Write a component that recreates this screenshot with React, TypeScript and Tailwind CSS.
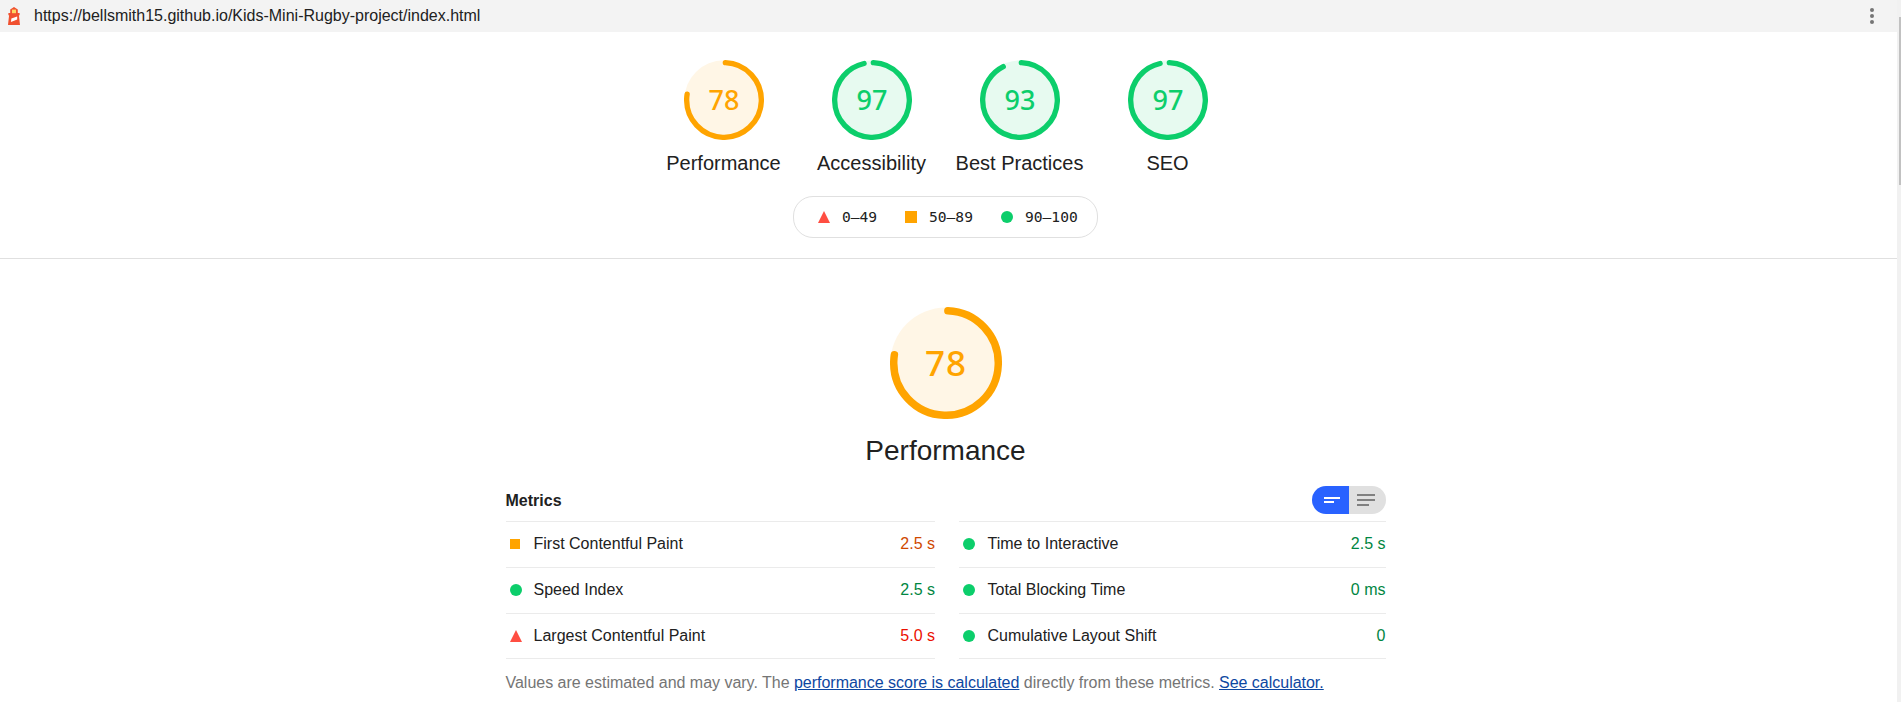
type Level = "pass" | "average" | "fail";

const tone = {
  pass: { ring: "stroke-[#0cce6b]", disc: "fill-[#e7faf0]", number: "text-[#0cce6b]", value: "text-[#018642]" },
  average: { ring: "stroke-[#ffa400]", disc: "fill-[#fff6e6]", number: "text-[#ffa400]", value: "text-[#d04900]" },
  fail: { ring: "stroke-[#ff4e42]", disc: "fill-[#ffedec]", number: "text-[#ff4e42]", value: "text-[#eb0f00]" },
};

function Marker({ level, small = false }: { level: Level; small?: boolean }) {
  if (level === "fail") {
    return (
      <svg className="h-3 w-3 shrink-0" viewBox="0 0 12 12">
        <path d="M6 0 12 12H0Z" fill="#ff4e42" />
      </svg>
    );
  }
  if (level === "average") {
    return <span className={small ? "mr-0.5 h-2.5 w-2.5 shrink-0 bg-[#ffa400]" : "h-3 w-3 shrink-0 bg-[#ffa400]"} />;
  }
  return <span className="h-3 w-3 shrink-0 rounded-full bg-[#0cce6b]" />;
}

function Gauge({ score, level, large = false }: { score: number; level: Level; large?: boolean }) {
  const length = 2 * Math.PI * 56;
  const arc = (score / 100) * length - 4;
  return (
    <div className={large ? "grid h-28 w-28" : "grid h-20 w-20"}>
      <svg viewBox="0 0 120 120" className="col-start-1 row-start-1 h-full w-full">
        <circle cx="60" cy="60" r="59.5" className={tone[level].disc} />
        <circle
          cx="60"
          cy="60"
          r="56"
          fill="none"
          strokeWidth="8"
          strokeLinecap="round"
          strokeDasharray={`${arc} ${length}`}
          transform="rotate(-87.9537 60 60)"
          className={tone[level].ring}
        />
      </svg>
      <div
        className={`col-start-1 row-start-1 flex items-center justify-center pb-0.5 font-['Noto_Sans',sans-serif] leading-none font-medium ${
          large ? "text-[35px] tracking-[1px]" : "text-[27px]"
        } ${tone[level].number}`}
      >
        {score}
      </div>
    </div>
  );
}

const categories: { label: string; score: number; level: Level }[] = [
  { label: "Performance", score: 78, level: "average" },
  { label: "Accessibility", score: 97, level: "pass" },
  { label: "Best Practices", score: 93, level: "pass" },
  { label: "SEO", score: 97, level: "pass" },
];

type Metric = { label: string; value: string; level: Level };

const leftMetrics: Metric[] = [
  { label: "First Contentful Paint", value: "2.5 s", level: "average" },
  { label: "Speed Index", value: "2.5 s", level: "pass" },
  { label: "Largest Contentful Paint", value: "5.0 s", level: "fail" },
];

const rightMetrics: Metric[] = [
  { label: "Time to Interactive", value: "2.5 s", level: "pass" },
  { label: "Total Blocking Time", value: "0 ms", level: "pass" },
  { label: "Cumulative Layout Shift", value: "0", level: "pass" },
];

function MetricColumn({ metrics, wide = false }: { metrics: Metric[]; wide?: boolean }) {
  return (
    <div className={`h-[138px] overflow-hidden border-b border-[#ebebeb] ${wide ? "w-[429px]" : "w-[427px]"}`}>
      {metrics.map((m) => (
        <div key={m.label} className="flex h-[46px] items-center border-t border-[#ebebeb] pb-px pl-1">
          <Marker level={m.level} small />
          <span className={wide ? "ml-[11.5px] flex-1 pb-px" : "ml-[12.5px] flex-1 pb-px"}>{m.label}</span>
          <span className={`pb-px ${wide ? "" : "pr-[0.5px]"} ${tone[m.level].value}`}>{m.value}</span>
        </div>
      ))}
    </div>
  );
}

function Lighthouse() {
  return (
    <svg width="12" height="18" viewBox="0 0 12 18">
      <path d="M6 0 9.8 2.5V6h1.8v2.2H10.9L12 18H0L1.1 8.2H.4V6H2.2V2.5Z" fill="#f0502f" />
      <path d="M4 2.6h4V6.2H4Z" fill="#fdd663" />
      <path d="M3.4 11.6 9.2 9.4v3.2L2.9 15Z" fill="#fff" />
    </svg>
  );
}

export default function App() {
  return (
    <div className="flex h-[702px] overflow-hidden bg-white font-['Liberation_Sans',Arial,sans-serif] text-base text-[#212121]">
      <div className="flex w-[1897px] flex-col">
        <header className="flex h-8 shrink-0 items-center bg-[#f3f3f3] pl-2">
          <Lighthouse />
          <span className="ml-3.5 flex-1">https://bellsmith15.github.io/Kids-Mini-Rugby-project/index.html</span>
          <svg width="4" height="16" viewBox="0 0 4 16" className="mr-[23px]" fill="#757575">
            <circle cx="2" cy="2" r="2" />
            <circle cx="2" cy="8" r="2" />
            <circle cx="2" cy="14" r="2" />
          </svg>
        </header>

        <section className="flex h-[227px] shrink-0 flex-col items-center border-b border-[#e0e0e0] pt-7 pr-[5px]">
          <div className="flex">
            {categories.map((c) => (
              <div key={c.label} className="flex w-[148px] flex-col items-center">
                <Gauge score={c.score} level={c.level} />
                <span className="mt-2.5 mr-px text-xl leading-[26px] whitespace-nowrap">{c.label}</span>
              </div>
            ))}
          </div>
          <div className="mt-5 mr-px flex h-[42px] w-[305px] items-center rounded-[20px] border border-[#e0e0e0] pl-6 font-['DejaVu_Sans_Mono',monospace] text-[14.6px]">
            <Marker level="fail" />
            <span className="ml-3 w-[63px]">0–49</span>
            <Marker level="average" />
            <span className="ml-3 w-[72px]">50–89</span>
            <Marker level="pass" />
            <span className="ml-3">90–100</span>
          </div>
        </section>

        <section className="ml-[506px] flex w-[880px] flex-col pt-12">
          <div className="flex flex-col items-center">
            <Gauge score={78} level="average" large />
            <h1 className="mt-3.5 mr-px text-[28px] leading-9">Performance</h1>
          </div>

          <div className="mt-[17px] flex h-7 items-center justify-between">
            <h2 className="-ml-[0.5px] pt-0.5 font-bold">Metrics</h2>
            <div className="flex h-7 overflow-hidden rounded-full">
              <div className="flex w-[37px] items-center bg-[#2962ff] pl-3">
                <svg width="16" height="6" fill="#fff" shapeRendering="crispEdges">
                  <path d="M0 0h16v2H0zM0 4h10v2H0z" />
                </svg>
              </div>
              <div className="flex w-[37px] items-center bg-[#e0e0e0] pl-2">
                <svg width="18" height="12" fill="#808080" shapeRendering="crispEdges">
                  <path d="M0 0h18v2H0zM0 5h18v2H0zM0 10h12v2H0z" />
                </svg>
              </div>
            </div>
          </div>

          <div className="mt-[7px] flex justify-between">
            <MetricColumn metrics={leftMetrics} wide />
            <MetricColumn metrics={rightMetrics} />
          </div>

          <p className="mt-3 -ml-[0.5px] tracking-[-0.015px] whitespace-nowrap text-[#757575]">
            Values are estimated and may vary. The{" "}
            <a className="text-[#0d47a1] underline">performance score is calculated</a> directly from these metrics.{" "}
            <a className="text-[#0d47a1] underline">See calculator.</a>
          </p>
        </section>
      </div>

      <div className="w-1 bg-[#f1f1f1] pt-[17px] pl-0.5">
        <div className="h-[168px] bg-[#c1c1c1]" />
      </div>
    </div>
  );
}
